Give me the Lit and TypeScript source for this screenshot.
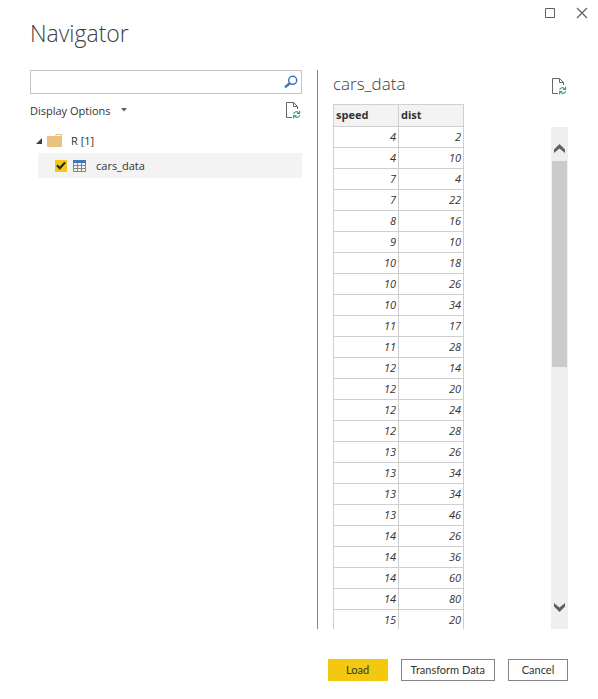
import { LitElement, html, css } from "lit";
import { customElement, property, query } from "lit/decorators.js";

const ROWS: [number, number][] = [
  [4, 2], [4, 10], [7, 4], [7, 22], [8, 16], [9, 10],
  [10, 18], [10, 26], [10, 34], [11, 17], [11, 28], [12, 14],
  [12, 20], [12, 24], [12, 28], [13, 26], [13, 34], [13, 34],
  [13, 46], [14, 26], [14, 36], [14, 60], [14, 80], [15, 20],
];

const baseStyles = css`
  * {
    box-sizing: border-box;
  }
  button {
    font: inherit;
    color: inherit;
    margin: 0;
    padding: 0;
    border: 0;
    background: none;
    cursor: pointer;
  }
  svg {
    display: block;
  }
`;

@customElement("refresh-button")
export class RefreshButton extends LitElement {
  static styles = [
    baseStyles,
    css`
      :host {
        display: block;
      }
      button {
        display: block;
      }
    `,
  ];

  render() {
    return html`<button type="button" aria-label="Refresh">
      <svg width="16" height="18" viewBox="0 0 16 18" fill="none">
        <path d="M6 15.5H.5V.5H7.5L11.5 4.5V7" stroke="#666" />
        <path d="M7.5 .5V4.5H11.5" stroke="#666" />
        <path
          d="M7.6 11.8C8.2 9.4 11.4 9 12.8 11M13.6 8.8V11.4H10.8M13.7 13.2C13 15.8 10 16 8.5 14M7.6 16.4V13.7H10.4"
          stroke="#4c9c80"
          stroke-width="1.2"
        />
      </svg>
    </button>`;
  }
}

@customElement("source-tree")
export class SourceTree extends LitElement {
  static styles = [
    baseStyles,
    css`
      :host {
        display: block;
      }
      .folder {
        display: flex;
        align-items: center;
        height: 25px;
        padding-left: 6px;
      }
      .folder-icon {
        margin: 0 8px 0 5px;
      }
      .item {
        display: flex;
        align-items: center;
        height: 25px;
        margin-left: 8px;
        padding-left: 17px;
        background: #f3f3f3;
      }
      .tick {
        appearance: none;
        width: 12px;
        height: 12px;
        margin: 0 6px 0 0;
        background: #f2c811;
      }
      .tick:checked {
        background: linear-gradient(#222, #222) 0 0 / 0 0 no-repeat #f2c811;
      }
      .tick:checked::before {
        content: "";
        display: block;
        width: 12px;
        height: 12px;
        background: #222;
        clip-path: polygon(10% 54%, 23% 42%, 40% 60%, 77% 18%, 91% 30%, 40% 86%);
      }
      .item-label {
        display: flex;
        align-items: center;
        gap: 10px;
      }
    `,
  ];

  render() {
    return html`
      <div class="folder">
        <svg width="6" height="6" viewBox="0 0 6 6"><path d="M6 0V6H0Z" fill="#404040" /></svg>
        <svg class="folder-icon" width="16" height="14" viewBox="0 0 16 14">
          <path d="M0 2H8L9 0H15V13H0Z" fill="#e8c282" />
          <path d="M9.5 1H14V2H9Z" fill="#fff" />
        </svg>
        <span>R [1]</span>
      </div>
      <div class="item">
        <input class="tick" id="cars" type="checkbox" checked />
        <label class="item-label" for="cars">
          <svg width="13" height="12" viewBox="0 0 13 12">
            <path d="M.5 3V11.5H12.5V3M4.5 3V12M8.5 3V12M0 5.5H13M0 8.5H13" fill="none" stroke="#858585" />
            <path d="M0 0H13V3H0Z" fill="#3f78b8" />
          </svg>
          cars_data
        </label>
      </div>
    `;
  }
}

@customElement("data-preview")
export class DataPreview extends LitElement {
  @property({ attribute: false }) rows: [number, number][] = [];
  @query(".viewport") viewport!: HTMLElement;

  static styles = [
    baseStyles,
    css`
      :host {
        display: flex;
        justify-content: space-between;
        min-height: 0;
      }
      .viewport {
        overflow: hidden;
      }
      table {
        border-spacing: 0;
        border: solid #cfcfcf;
        border-width: 1px 0 0 1px;
        font-size: 11px;
        line-height: 20px;
      }
      th,
      td {
        width: 65px;
        height: 21px;
        padding: 0 2px;
        border: solid #cfcfcf;
        border-width: 0 1px 1px 0;
      }
      th {
        height: 22px;
        text-align: left;
        vertical-align: top;
        background: #f3f3f3;
      }
      td {
        text-align: right;
        font-style: italic;
      }
      .scrollbar {
        display: flex;
        flex-direction: column;
        width: 17px;
        margin-top: 23px;
        background: #efefef;
      }
      .step {
        display: grid;
        place-items: center;
        height: 34px;
        padding-top: 8px;
      }
      .step.down {
        padding: 0 0 10px;
      }
      .track {
        flex: 1;
        padding: 0 1px;
      }
      .thumb {
        height: 47.5%;
        background: #cbcbcb;
      }
    `,
  ];

  private step(distance: number) {
    this.viewport.scrollBy({ top: distance });
  }

  render() {
    return html`
      <div class="viewport">
        <table>
          <thead>
            <tr><th scope="col">speed</th><th scope="col">dist</th></tr>
          </thead>
          <tbody>
            ${this.rows.map(([speed, dist]) => html`<tr><td>${speed}</td><td>${dist}</td></tr>`)}
          </tbody>
        </table>
      </div>
      <div class="scrollbar">
        <button class="step" type="button" aria-label="Scroll up" @click=${() => this.step(-21)}>
          <svg width="11" height="9" viewBox="0 0 11 9"><path d="M0 5.5L5.5 0L11 5.5V9L5.5 4.5L0 9Z" fill="#606060" /></svg>
        </button>
        <div class="track"><div class="thumb"></div></div>
        <button class="step down" type="button" aria-label="Scroll down" @click=${() => this.step(21)}>
          <svg width="11" height="9" viewBox="0 0 11 9"><path d="M0 3.5L5.5 9L11 3.5V0L5.5 4.5L0 0Z" fill="#606060" /></svg>
        </button>
      </div>
    `;
  }
}

@customElement("app-root")
export class AppRoot extends LitElement {
  static styles = [
    baseStyles,
    css`
      :host {
        display: flex;
        flex-direction: column;
        height: 100vh;
        padding: 0 30px;
        background: #fff;
        color: #333;
        font: 11px/16px "Open Sans", "Noto Sans", sans-serif;
      }
      .window-bar {
        display: flex;
        justify-content: flex-end;
        gap: 20px;
        height: 18px;
        padding-top: 7px;
        margin-right: -20px;
      }
      h1,
      h2 {
        margin: 0;
        font-weight: 300;
        color: #404040;
      }
      h1 {
        height: 52px;
        font-size: 23px;
        line-height: 30px;
      }
      h2 {
        font-size: 17px;
        line-height: 28px;
      }
      .panes {
        flex: 1;
        min-height: 0;
        display: grid;
        grid-template-columns: 272fr 251fr;
        gap: 15px;
      }
      .search {
        display: flex;
        align-items: center;
        height: 24px;
        padding-right: 3px;
        border: 1px solid #c4c4c4;
      }
      .search input {
        flex: 1;
        min-width: 0;
        padding: 0 6px;
        border: 0;
        outline: 0;
        background: none;
        font: inherit;
      }
      .options {
        display: flex;
        justify-content: space-between;
        align-items: center;
        height: 34px;
      }
      .display {
        display: flex;
        align-items: center;
        gap: 10px;
      }
      .display svg {
        margin-bottom: 2px;
      }
      .preview {
        display: flex;
        flex-direction: column;
        min-height: 0;
        padding-left: 15px;
        border-left: 1px solid #858585;
      }
      .preview-head {
        display: flex;
        justify-content: space-between;
        align-items: center;
        height: 34px;
      }
      .preview-head h2 {
        align-self: flex-start;
      }
      data-preview {
        flex: 1;
      }
      .actions {
        display: flex;
        justify-content: flex-end;
        gap: 13px;
        padding: 30px 0 18px;
      }
      .action {
        min-width: 60px;
        height: 22px;
        padding: 0 9px;
        border: 1px solid #858585;
        font-family: Lato, "Open Sans", sans-serif;
      }
      .action.primary {
        border-color: #f2c811;
        background: #f2c811;
      }
    `,
  ];

  render() {
    return html`
      <div class="window-bar">
        <button type="button" aria-label="Maximize">
          <svg width="11" height="12" viewBox="0 0 11 12"><path d="M.5 1.5H9.5V10.5H.5Z" fill="none" stroke="#606060" /></svg>
        </button>
        <button type="button" aria-label="Close">
          <svg width="12" height="12" viewBox="0 0 12 12"><path d="M1 1L11 11M11 1L1 11" fill="none" stroke="#606060" stroke-width="1.2" /></svg>
        </button>
      </div>
      <h1>Navigator</h1>
      <div class="panes">
        <section>
          <div class="search">
            <input type="text" aria-label="Search" />
            <button type="button" aria-label="Search">
              <svg width="14" height="14" viewBox="0 0 14 14" fill="none" stroke="#3f78b8">
                <circle cx="8.7" cy="5.3" r="4" stroke-width="1.5" />
                <path d="M6 8L1 12.4" stroke-width="2.4" />
              </svg>
            </button>
          </div>
          <div class="options">
            <button class="display" type="button">
              Display Options
              <svg width="6" height="4" viewBox="0 0 6 4"><path d="M0 0H6L3 3.5Z" fill="#606060" /></svg>
            </button>
            <refresh-button></refresh-button>
          </div>
          <source-tree></source-tree>
        </section>
        <section class="preview">
          <div class="preview-head">
            <h2>cars_data</h2>
            <refresh-button></refresh-button>
          </div>
          <data-preview .rows=${ROWS}></data-preview>
        </section>
      </div>
      <div class="actions">
        <button class="action primary" type="button">Load</button>
        <button class="action" type="button">Transform Data</button>
        <button class="action" type="button">Cancel</button>
      </div>
    `;
  }
}
